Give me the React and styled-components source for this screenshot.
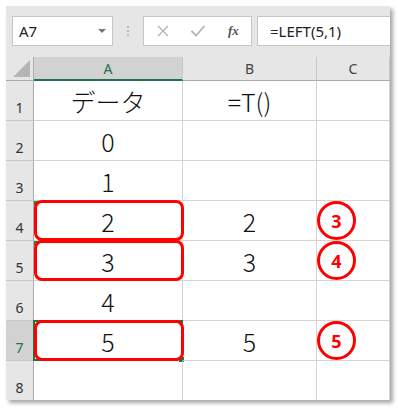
import React from 'react';
import styled, { createGlobalStyle } from 'styled-components';

const GlobalStyle = createGlobalStyle`
	html, body {
		margin: 0;
		padding: 0;
		background: #ffffff;
	}
	body {
		width: 398px;
		height: 410px;
		overflow: hidden;
		font-family: "Noto Sans", "Open Sans", sans-serif;
	}
`

const Frame = styled.div`
	margin: 6px 0 0 6px;
	width: 384px;
	height: 394px;
	background: #e6e6e6;
	box-shadow: 3px 3px 4px rgba(0, 0, 0, 0.35);
	overflow: hidden;
	display: flex;
	flex-direction: column;
`

const Toolbar = styled.div`
	height: 51px;
	flex: none;
	display: flex;
	align-items: flex-start;
	padding: 10px 0 0 6px;
	box-sizing: border-box;
`

const NameBox = styled.div`
	width: 101px;
	height: 30px;
	box-sizing: border-box;
	background: #fff;
	border: 1px solid #c6c6c6;
	display: flex;
	align-items: center;
	justify-content: space-between;
	padding: 0 6px 0 6px;
	font-size: 15px;
	color: #222;
`

const Caret = styled.span`
	width: 0;
	height: 0;
	border-left: 4px solid transparent;
	border-right: 4px solid transparent;
	border-top: 4px solid #777;
`

const Dots = styled.div`
	width: 30px;
	height: 30px;
	display: flex;
	flex-direction: column;
	align-items: center;
	justify-content: center;
	gap: 2px;
	span {
		width: 2px;
		height: 2px;
		background: #b8b8b8;
	}
`

const ButtonBox = styled.div`
	width: 109px;
	height: 30px;
	box-sizing: border-box;
	background: #fff;
	border: 1px solid #c6c6c6;
	display: flex;
	align-items: center;
	padding-left: 12px;
	gap: 20px;
`

const Fx = styled.span`
	font-family: "Liberation Serif", "DejaVu Serif", serif;
	font-style: italic;
	font-weight: bold;
	font-size: 13px;
	color: #555;
	margin-left: 2px;
`

const FormulaBar = styled.div`
	flex: 1;
	margin-left: 5px;
	margin-right: -2px;
	height: 30px;
	box-sizing: border-box;
	background: #fff;
	border: 1px solid #c6c6c6;
	display: flex;
	align-items: center;
	padding-left: 12px;
	font-size: 15px;
	color: #222;
`

const Sheet = styled.div`
	display: grid;
	grid-template-columns: 28px 149px 134px 73px;
	grid-template-rows: 24px repeat(8, 40px);
	background: #fff;
`

const Corner = styled.div`
	background: #e6e6e6;
	border-right: 1px solid #ababab;
	border-bottom: 1px solid #ababab;
	box-sizing: border-box;
	position: relative;
	&::after {
		content: "";
		position: absolute;
		right: 3px;
		bottom: 3px;
		width: 0;
		height: 0;
		border-left: 17px solid transparent;
		border-bottom: 17px solid #b4b4b4;
	}
`

const ColHead = styled.div`
	background: ${p => (p.$active ? '#d2d2d2' : '#e6e6e6')};
	color: ${p => (p.$active ? '#217346' : '#444')};
	border-right: 1px solid #c8c8c8;
	border-bottom: ${p => (p.$active ? '2px solid #217346' : '1px solid #ababab')};
	box-sizing: border-box;
	display: flex;
	align-items: center;
	justify-content: center;
	font-size: 14px;
`

const RowHead = styled.div`
	background: ${p => (p.$active ? '#d2d2d2' : '#e6e6e6')};
	color: ${p => (p.$active ? '#217346' : '#333')};
	border-right: 1px solid #ababab;
	border-bottom: 1px solid #c8c8c8;
	box-sizing: border-box;
	display: flex;
	align-items: flex-end;
	justify-content: center;
	padding-bottom: 3px;
	font-size: 14px;
`

const Cell = styled.div`
	position: relative;
	border-right: 1px solid #d4d4d4;
	border-bottom: 1px solid #d4d4d4;
	box-sizing: border-box;
	display: flex;
	align-items: center;
	justify-content: ${p => (p.$left ? 'flex-start' : 'center')};
	font-family: "Noto Sans CJK JP", "Noto Sans", sans-serif;
	font-weight: 300;
	font-size: 25px;
	color: #111;
	${p => p.$flag && `
		&::before {
			content: "";
			position: absolute;
			left: 0;
			top: 0;
			border-right: 5px solid transparent;
			border-top: 5px solid #1e8c35;
		}
	`}
`

const Selection = styled.div`
	position: absolute;
	left: -1px;
	top: -1px;
	right: -1px;
	bottom: -1px;
	border: 2px solid #217346;
	&::after {
		content: "";
		position: absolute;
		right: -4px;
		bottom: -4px;
		width: 5px;
		height: 5px;
		background: #217346;
		border: 1px solid #fff;
	}
`

const Mark = styled.div`
	position: absolute;
	left: 0;
	top: -1px;
	right: -2px;
	bottom: -1px;
	border: 3px solid #ff0000;
	border-radius: 8px;
`

const Badge = styled.div`
	width: 39px;
	height: 39px;
	box-sizing: border-box;
	margin-left: 0;
	border: 3px solid #ff0000;
	border-radius: 50%;
	display: flex;
	align-items: center;
	justify-content: center;
	font-family: "Noto Sans", "Liberation Sans", sans-serif;
	font-weight: bold;
	font-size: 18px;
	color: #ff0000;
`

const rows = [
	{ a: 'データ', b: '=T()' },
	{ a: '0' },
	{ a: '1' },
	{ a: '2', b: '2', badge: '3', mark: true, flag: true },
	{ a: '3', b: '3', badge: '4', mark: true, flag: true },
	{ a: '4' },
	{ a: '5', b: '5', badge: '5', mark: true, selected: true },
	{},
];

const Cross = () => (
	<svg width="14" height="14" viewBox="0 0 14 14">
		<path d="M2 2 L12 12 M12 2 L2 12" stroke="#b4b4b4" strokeWidth="1.4" fill="none" />
	</svg>
);

const Check = () => (
	<svg width="16" height="14" viewBox="0 0 16 14">
		<path d="M1.5 7 L6 11.5 L14.5 2" stroke="#b4b4b4" strokeWidth="1.8" fill="none" />
	</svg>
);

const App = () => {
	return (
		<>
			<GlobalStyle />
			<Frame>
				<Toolbar>
					<NameBox>
						A7
						<Caret />
					</NameBox>
					<Dots>
						<span />
						<span />
						<span />
					</Dots>
					<ButtonBox>
						<Cross />
						<Check />
						<Fx>fx</Fx>
					</ButtonBox>
					<FormulaBar>=LEFT(5,1)</FormulaBar>
				</Toolbar>
				<Sheet>
					<Corner />
					<ColHead $active>A</ColHead>
					<ColHead>B</ColHead>
					<ColHead>C</ColHead>
					{rows.map((r, i) => (
						<React.Fragment key={i}>
							<RowHead $active={r.selected}>{i + 1}</RowHead>
							<Cell $flag={r.flag}>
								{r.selected && <Selection />}
								{r.mark && <Mark />}
								{r.a}
							</Cell>
							<Cell>{r.b}</Cell>
							<Cell $left>{r.badge && <Badge>{r.badge}</Badge>}</Cell>
						</React.Fragment>
					))}
				</Sheet>
			</Frame>
		</>
	);
};

export default App;
